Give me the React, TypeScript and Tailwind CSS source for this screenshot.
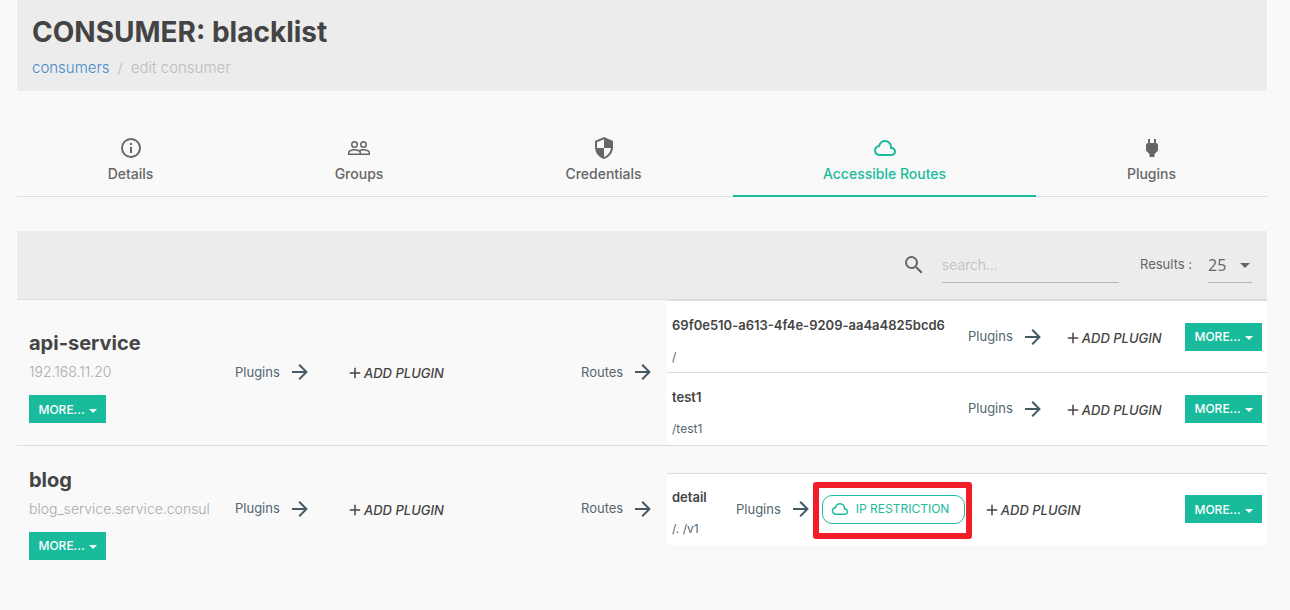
import React from "react";

const icons = {
  info: "M11,9H13V7H11M12,20C7.59,20 4,16.41 4,12C4,7.59 7.59,4 12,4C16.41,4 20,7.59 20,12C20,16.41 16.41,20 12,20M12,2A10,10 0 0,0 2,12A10,10 0 0,0 12,22A10,10 0 0,0 22,12A10,10 0 0,0 12,2M11,17H13V11H11V17Z",
  groups:
    "M16.5,6.5A2,2 0 0,1 18.5,8.5A2,2 0 0,1 16.5,10.5A2,2 0 0,1 14.5,8.5A2,2 0 0,1 16.5,6.5M16.5,12A3.5,3.5 0 0,0 20,8.5A3.5,3.5 0 0,0 16.5,5A3.5,3.5 0 0,0 13,8.5A3.5,3.5 0 0,0 16.5,12M7.5,6.5A2,2 0 0,1 9.5,8.5A2,2 0 0,1 7.5,10.5A2,2 0 0,1 5.5,8.5A2,2 0 0,1 7.5,6.5M7.5,12A3.5,3.5 0 0,0 11,8.5A3.5,3.5 0 0,0 7.5,5A3.5,3.5 0 0,0 4,8.5A3.5,3.5 0 0,0 7.5,12M21.5,17.5H14V16.25C14,15.79 13.8,15.39 13.5,15.03C14.36,14.73 15.44,14.5 16.5,14.5C18.94,14.5 21.5,15.71 21.5,16.25M12.5,17.5H2.5V16.25C2.5,15.71 5.06,14.5 7.5,14.5C9.94,14.5 12.5,15.71 12.5,16.25M16.5,13C15.3,13 13.43,13.34 12,14C10.57,13.33 8.7,13 7.5,13C5.33,13 1,14.08 1,16.25V19H23V16.25C23,14.08 18.67,13 16.5,13Z",
  security:
    "M12,12H19C18.47,16.11 15.72,19.78 12,20.92V12H5V6.3L12,3.19M12,1L3,5V11C3,16.55 6.84,21.73 12,23C17.16,21.73 21,16.55 21,11V5L12,1Z",
  cloud:
    "M6.5 20Q4.22 20 2.61 18.43 1 16.85 1 14.58 1 12.63 2.17 11.1 3.35 9.57 5.25 9.15 5.88 6.85 7.75 5.43 9.63 4 12 4 14.93 4 16.96 6.04 19 8.07 19 11 20.73 11.2 21.86 12.5 23 13.78 23 15.5 23 17.38 21.69 18.69 20.38 20 18.5 20M6.5 18H18.5Q19.55 18 20.27 17.27 21 16.55 21 15.5 21 14.45 20.27 13.73 19.55 13 18.5 13H17V11Q17 8.93 15.54 7.46 14.08 6 12 6 9.93 6 8.46 7.46 7 8.93 7 11H6.5Q5.05 11 4.03 12.03 3 13.05 3 14.5 3 15.95 4.03 17 5.05 18 6.5 18Z",
  plug: "M16,7V3H14V7H10V3H8V7H8C7,7 6,8 6,9V14.5L9.5,18V21H14.5V18L18,14.5V9C18,8 17,7 16,7Z",
  search:
    "M9.5,3A6.5,6.5 0 0,1 16,9.5C16,11.11 15.41,12.59 14.44,13.73L14.71,14H15.5L20.5,19L19,20.5L14,15.5V14.71L13.73,14.44C12.59,15.41 11.11,16 9.5,16A6.5,6.5 0 0,1 3,9.5A6.5,6.5 0 0,1 9.5,3M9.5,5C7,5 5,7 5,9.5C5,12 7,14 9.5,14C12,14 14,12 14,9.5C14,7 12,5 9.5,5Z",
  arrow:
    "M4,11V13H16L10.5,18.5L11.92,19.92L19.84,12L11.92,4.08L10.5,5.5L16,11H4Z",
  plus: "M19,13H13V19H11V13H5V11H11V5H13V11H19V13Z",
};

type IconName = keyof typeof icons;

function Icon({ name, className }: { name: IconName; className: string }) {
  return (
    <svg viewBox="0 0 24 24" fill="currentColor" aria-hidden="true" className={`shrink-0 ${className}`}>
      <path fillRule="evenodd" d={icons[name]} />
    </svg>
  );
}

function Caret({ className }: { className: string }) {
  return (
    <svg viewBox="0 0 8 4" fill="currentColor" aria-hidden="true" className={className}>
      <path d="M0 0h8L4 4z" />
    </svg>
  );
}

const tabs: { label: string; icon: IconName }[] = [
  { label: "Details", icon: "info" },
  { label: "Groups", icon: "groups" },
  { label: "Credentials", icon: "security" },
  { label: "Accessible Routes", icon: "cloud" },
  { label: "Plugins", icon: "plug" },
];

interface Route {
  name: string;
  paths: string;
  plugins: string[];
}

interface Service {
  name: string;
  host: string;
  routes: Route[];
}

const services: Service[] = [
  {
    name: "api-service",
    host: "192.168.11.20",
    routes: [
      { name: "69f0e510-a613-4f4e-9209-aa4a4825bcd6", paths: "/", plugins: [] },
      { name: "test1", paths: "/test1", plugins: [] },
    ],
  },
  {
    name: "blog",
    host: "blog_service.service.consul",
    routes: [{ name: "detail", paths: "/. /v1", plugins: ["IP RESTRICTION"] }],
  },
];

function MoreButton() {
  return (
    <button
      type="button"
      className="flex h-7 w-[77px] items-center justify-center gap-1 bg-[#1abb9c] pt-px text-xs font-medium text-white"
    >
      MORE...
      <Caret className="mt-0.5 h-1 w-2" />
    </button>
  );
}

function AddPlugin() {
  return (
    <button
      type="button"
      className="flex items-center pt-0.5 text-[13px] leading-5 font-medium whitespace-nowrap text-[#444] italic"
    >
      <Icon name="plus" className="-ml-px size-[18px]" />
      ADD PLUGIN
    </button>
  );
}

function Pointer({ label }: { label: string }) {
  return (
    <div className="flex items-center gap-2 text-[13px] text-[#546670]">
      {label}
      <Icon name="arrow" className="size-6 text-[#455a64]" />
    </div>
  );
}

function PluginBadge({ label }: { label: string }) {
  return (
    <div className="relative">
      <button
        type="button"
        className="flex h-[29px] w-[143px] items-center gap-[7px] rounded-[10px] border border-[#1abb9c] pl-2 text-xs whitespace-nowrap text-[#1abb9c]"
      >
        <Icon name="cloud" className="size-[18px]" />
        {label}
      </button>
      <span className="pointer-events-none absolute -top-[13px] -right-[7px] -bottom-[15px] -left-[9px] rounded-[3px] border-[6px] border-[#f11d28]" />
    </div>
  );
}

function RouteTable({ routes }: { routes: Route[] }) {
  return (
    <table className="w-full table-fixed border-collapse bg-white">
      <tbody>
        {routes.map((route) => (
          <tr key={route.name} className="border-t border-[#ddd]">
            <td className="h-[72px] p-0">
              <div className="flex items-center px-[5px]">
                <div className={`shrink-0 pt-2 whitespace-nowrap ${route.plugins.length ? "w-16" : "w-[296px]"}`}>
                  <div className="mb-3 text-[13px] leading-5 font-semibold text-[#444]">{route.name}</div>
                  <div className="text-xs leading-5 text-[#546670]">{route.paths}</div>
                </div>
                <Pointer label="Plugins" />
                <div className={`flex items-center ${route.plugins.length ? "gap-[19px] pl-[9px]" : "pl-5"}`}>
                  {route.plugins.map((plugin) => (
                    <PluginBadge key={plugin} label={plugin} />
                  ))}
                  <AddPlugin />
                </div>
                <div className="ml-auto">
                  <MoreButton />
                </div>
              </div>
            </td>
          </tr>
        ))}
      </tbody>
    </table>
  );
}

export default function App() {
  return (
    <main className="min-h-screen bg-[#f9f9f9] pr-[23px] pl-[17px] font-['Inter','Liberation_Sans',sans-serif] text-[#444]">
      <header className="bg-[#ececec] px-[15px] pt-3 pb-3">
        <h1 className="text-[28px] leading-10 font-bold">CONSUMER: blacklist</h1>
        <nav aria-label="Breadcrumb" className="mt-1 flex gap-2 text-[15px] leading-[23px] font-light text-[#bbb]">
          <a href="#consumers" className="text-[#428bca]">
            consumers
          </a>
          <span>/</span>
          <span>edit consumer</span>
        </nav>
      </header>

      <div role="tablist" className="mt-9 grid grid-cols-[227fr_230fr_259fr_303fr_231fr] border-b border-[#ddd]">
        {tabs.map(({ label, icon }) => {
          const active = icon === "cloud";
          return (
            <button
              key={label}
              type="button"
              role="tab"
              aria-selected={active}
              className={`-mb-px flex h-[70px] flex-col items-center border-b-2 pt-[9px] text-sm font-medium ${
                active ? "border-[#1abb9c] text-[#1abb9c]" : "border-transparent text-[#666]"
              }`}
            >
              <Icon name={icon} className="mb-1 size-6" />
              {label}
            </button>
          );
        })}
      </div>

      <section className="mt-[34px]">
        <div className="flex h-[69px] items-center justify-end border-b border-[#ddd] bg-[#ececec] pr-[15px] text-[#666]">
          <label htmlFor="search" aria-label="Search">
            <Icon name="search" className="mr-4 size-6" />
          </label>
          <input
            id="search"
            type="text"
            placeholder="search..."
            className="mr-[21px] h-9 w-[177px] border-b border-[#b5b5b5] bg-transparent text-sm font-light outline-none placeholder:text-[#bbb]"
          />
          <label htmlFor="results" className="w-[68px] text-[13px] whitespace-nowrap">
            Results :
          </label>
          <div className="relative">
            <select
              id="results"
              defaultValue="25"
              className="h-9 w-11 appearance-none border-b border-[#b5b5b5] bg-transparent font-['Open_Sans',sans-serif] text-base outline-none"
            >
              <option>25</option>
              <option>50</option>
              <option>100</option>
            </select>
            <Caret className="pointer-events-none absolute top-4 right-0.5 h-[5px] w-[10px]" />
          </div>
        </div>

        <table className="w-full table-fixed border-collapse">
          <colgroup>
            <col className="w-[218px]" />
            <col className="w-[112px]" />
            <col />
            <col className="w-[86px]" />
            <col className="w-[48%]" />
          </colgroup>
          <tbody>
            {services.map((service) => (
              <tr key={service.name} className="border-b border-[#ddd] last:border-b-0">
                <td className="h-[127px] p-0 pt-2 pl-3">
                  <h2 className="text-xl leading-7 font-bold">{service.name}</h2>
                  <div className="mt-[5px] mb-[13px] text-sm leading-5 font-light whitespace-nowrap text-[#aaa]">
                    {service.host}
                  </div>
                  <MoreButton />
                </td>
                <td className="p-0">
                  <Pointer label="Plugins" />
                </td>
                <td className="p-0">
                  <AddPlugin />
                </td>
                <td className="p-0">
                  <Pointer label="Routes" />
                </td>
                <td className="p-0">
                  <RouteTable routes={service.routes} />
                </td>
              </tr>
            ))}
          </tbody>
        </table>
      </section>
    </main>
  );
}
